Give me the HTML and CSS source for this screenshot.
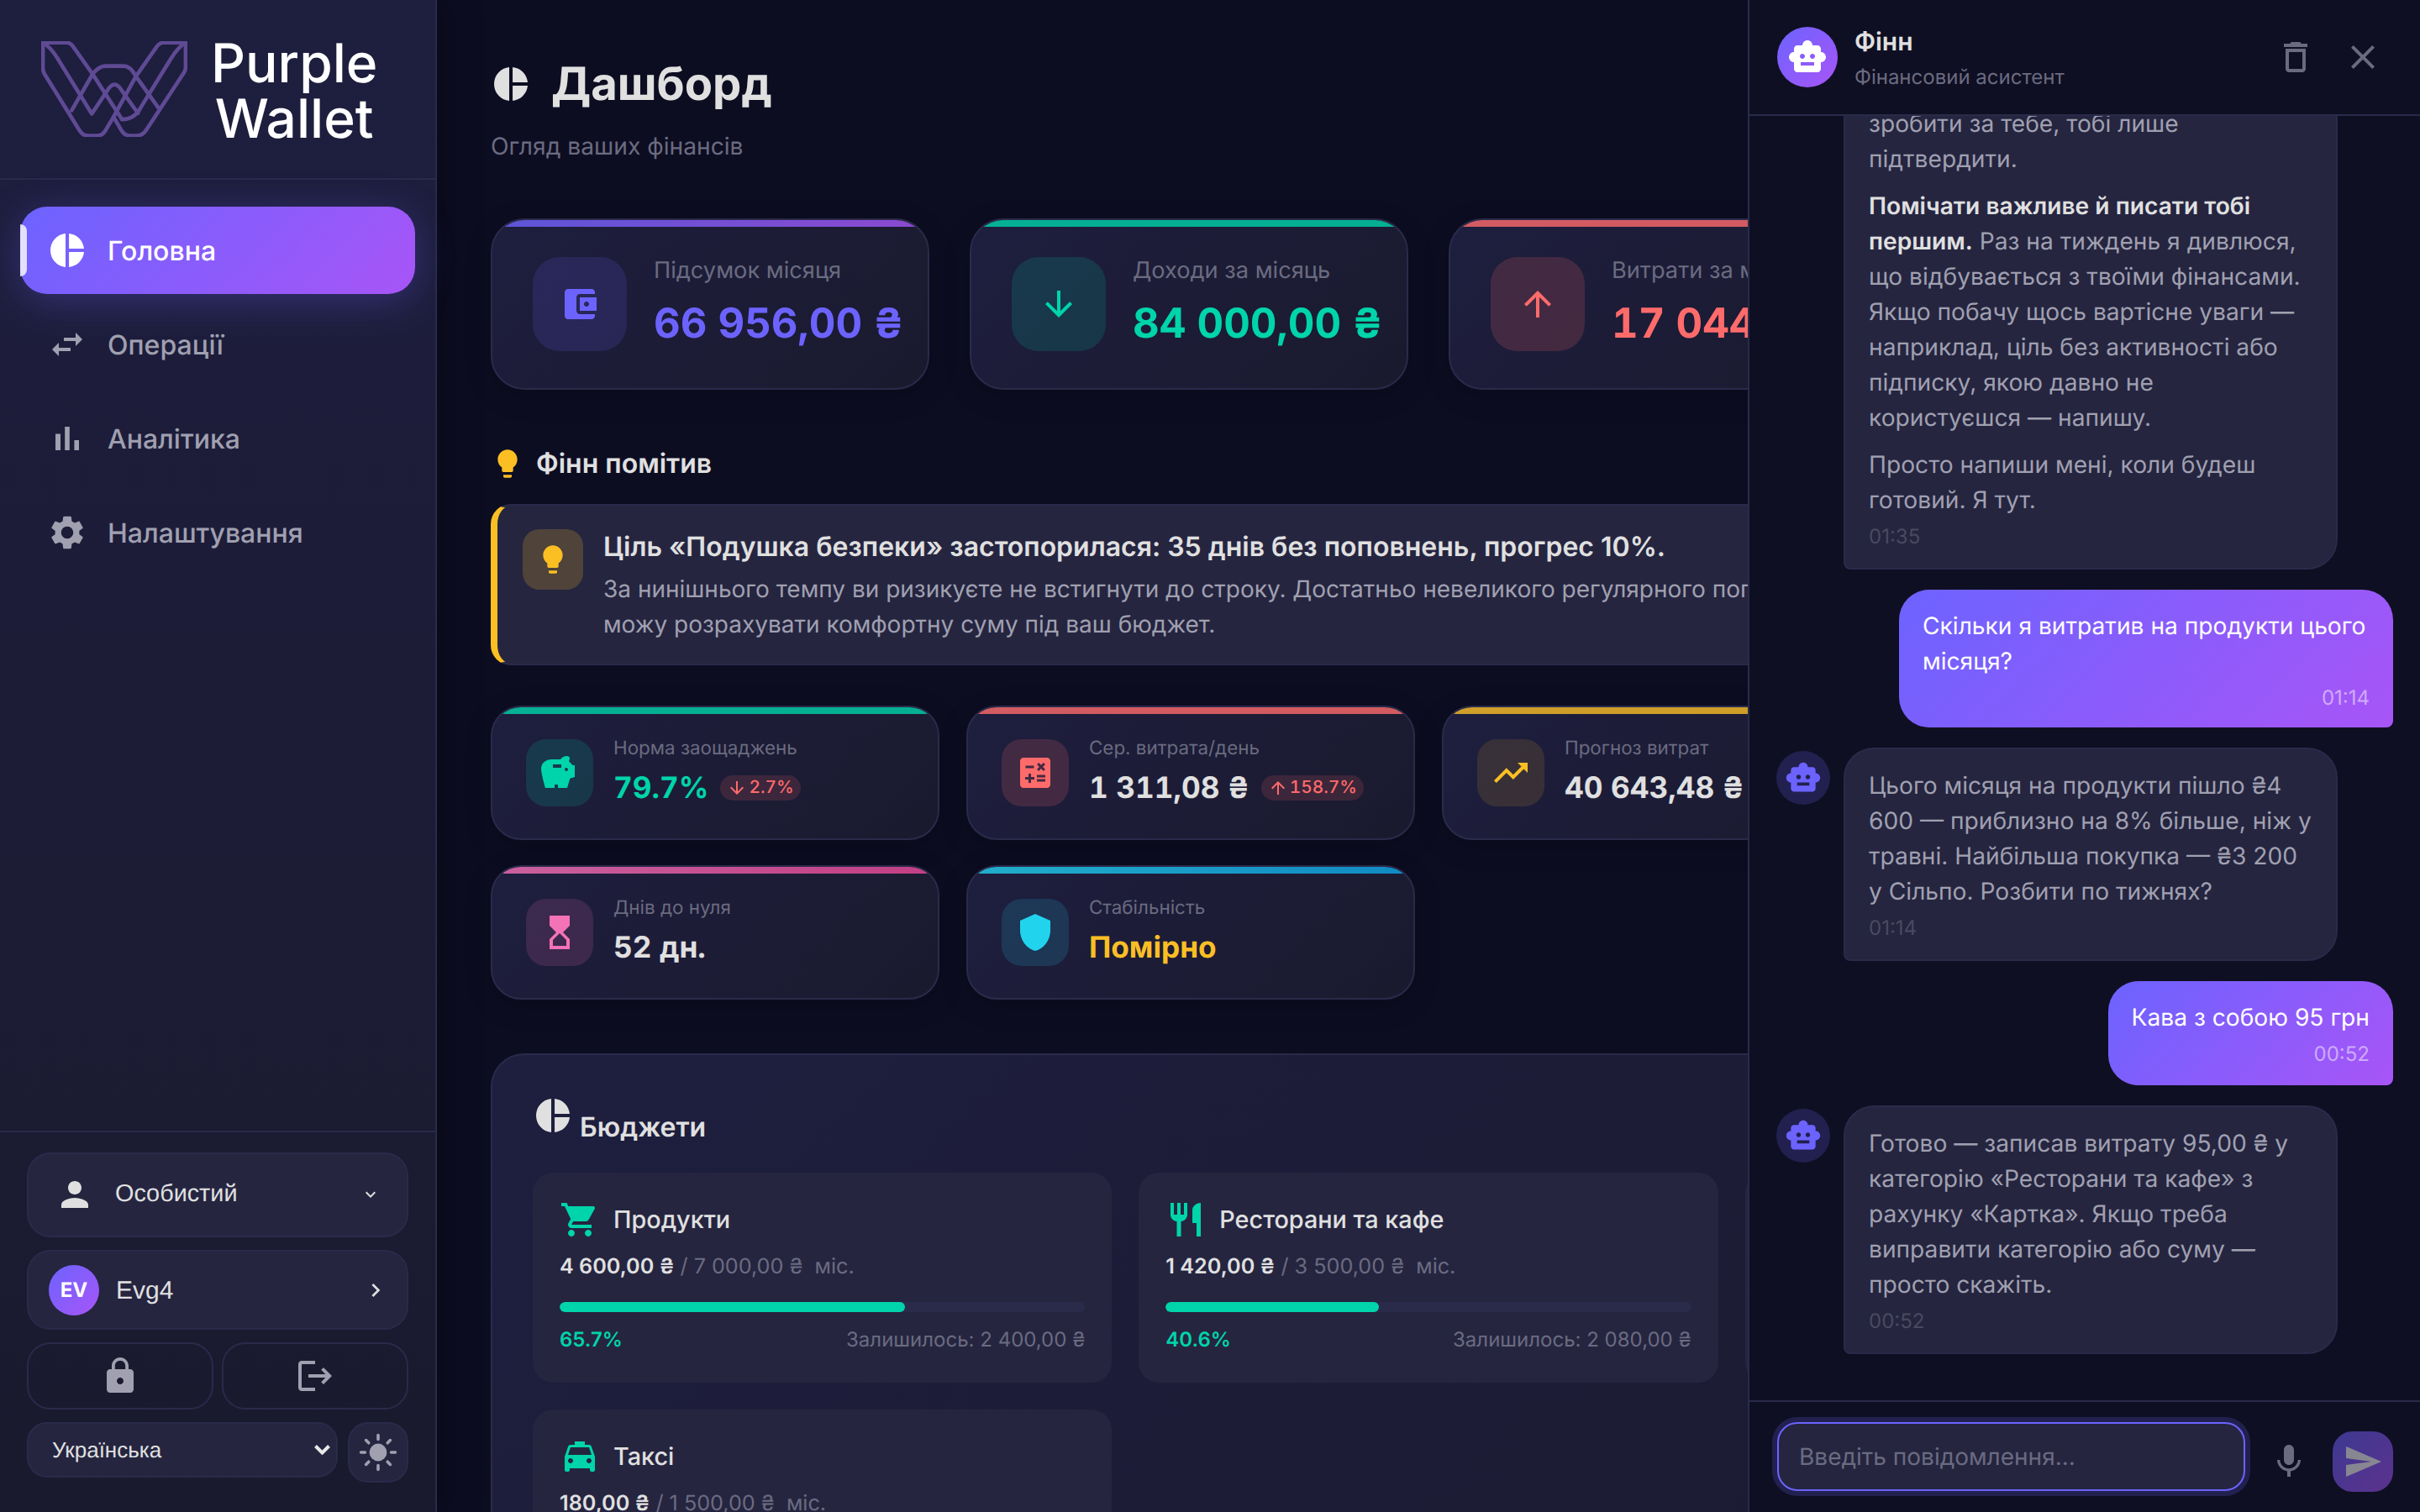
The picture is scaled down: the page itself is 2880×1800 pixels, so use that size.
FILE: index.html
```html
<!DOCTYPE html>
<html lang="uk">
<head>
<meta charset="utf-8">
<title>Purple Wallet</title>
<link rel="stylesheet" href="styles.css">
</head>
<body>
<svg class="defs" aria-hidden="true">
  <symbol id="i-pie" viewBox="0 0 24 24"><path d="M11 2v20c-5.07-.5-9-4.79-9-10s3.93-9.5 9-10zm2.03 0v8.99H22c-.47-4.74-4.24-8.52-8.97-8.99zm0 11.01V22c4.74-.47 8.5-4.25 8.97-8.99h-8.97z"/></symbol>
  <symbol id="i-swap" viewBox="0 0 24 24"><path d="M6.99 11L3 15l3.99 4v-3H14v-2H6.99v-3zM21 9l-3.99-4v3H10v2h7.01v3L21 9z"/></symbol>
  <symbol id="i-bars" viewBox="0 0 24 24"><path d="M5 9.2h3V19H5zM10.6 5h2.8v14h-2.8zm5.6 8H19v6h-2.8z"/></symbol>
  <symbol id="i-gear" viewBox="0 0 24 24"><path d="M19.14 12.94c.04-.3.06-.61.06-.94 0-.32-.02-.64-.07-.94l2.03-1.58c.18-.14.23-.41.12-.61l-1.92-3.32c-.12-.22-.37-.29-.59-.22l-2.39.96c-.5-.38-1.03-.7-1.62-.94l-.36-2.54c-.04-.24-.24-.41-.48-.41h-3.84c-.24 0-.43.17-.47.41l-.36 2.54c-.59.24-1.13.57-1.62.94l-2.39-.96c-.22-.08-.47 0-.59.22L2.74 8.87c-.12.21-.08.47.12.61l2.03 1.58c-.05.3-.09.63-.09.94s.02.64.07.94l-2.03 1.58c-.18.14-.23.41-.12.61l1.92 3.32c.12.22.37.29.59.22l2.39-.96c.5.38 1.03.7 1.62.94l.36 2.54c.05.24.24.41.48.41h3.84c.24 0 .44-.17.47-.41l.36-2.54c.59-.24 1.13-.56 1.62-.94l2.39.96c.22.08.47 0 .59-.22l1.92-3.32c.12-.22.07-.47-.12-.61l-2.01-1.58zM12 15.6c-1.98 0-3.6-1.62-3.6-3.6s1.62-3.6 3.6-3.6 3.6 1.62 3.6 3.6-1.62 3.6-3.6 3.6z"/></symbol>
  <symbol id="i-person" viewBox="0 0 24 24"><path d="M12 12c2.21 0 4-1.79 4-4s-1.79-4-4-4-4 1.79-4 4 1.79 4 4 4zm0 2c-2.67 0-8 1.34-8 4v2h16v-2c0-2.66-5.33-4-8-4z"/></symbol>
  <symbol id="i-more" viewBox="0 0 24 24"><path d="M16.59 8.59L12 13.17 7.41 8.59 6 10l6 6 6-6z"/></symbol>
  <symbol id="i-right" viewBox="0 0 24 24"><path d="M10 6L8.59 7.41 13.17 12l-4.58 4.59L10 18l6-6z"/></symbol>
  <symbol id="i-lock" viewBox="0 0 24 24"><path d="M18 8h-1V6c0-2.76-2.24-5-5-5S7 3.24 7 6v2H6c-1.1 0-2 .9-2 2v10c0 1.1.9 2 2 2h12c1.1 0 2-.9 2-2V10c0-1.1-.9-2-2-2zm-6 9c-1.1 0-2-.9-2-2s.9-2 2-2 2 .9 2 2-.9 2-2 2zm3.1-9H8.9V6c0-1.71 1.39-3.1 3.1-3.1 1.71 0 3.1 1.39 3.1 3.1v2z"/></symbol>
  <symbol id="i-logout" viewBox="0 0 24 24"><path d="M17 7l-1.41 1.41L18.17 11H8v2h10.17l-2.58 2.58L17 17l5-5zM4 5h8V3H4c-1.1 0-2 .9-2 2v14c0 1.1.9 2 2 2h8v-2H4V5z"/></symbol>
  <symbol id="i-sun" viewBox="0 0 24 24"><circle cx="12" cy="12" r="5.2"/><g stroke="currentColor" stroke-width="1.8" stroke-linecap="round"><path d="M12 1.8v2.4M12 19.8v2.4M1.8 12h2.4M19.8 12h2.4M4.8 4.8l1.6 1.6M17.6 17.6l1.6 1.6M4.8 19.2l1.6-1.6M17.6 6.4l1.6-1.6"/></g></symbol>
  <symbol id="i-wallet" viewBox="0 0 24 24"><path d="M21 18v1c0 1.1-.9 2-2 2H5c-1.11 0-2-.9-2-2V5c0-1.1.89-2 2-2h14c1.1 0 2 .9 2 2v1h-9c-1.11 0-2 .9-2 2v8c0 1.1.89 2 2 2h9zm-9-2h10V8H12v8zm4-2.5c-.83 0-1.5-.67-1.5-1.5s.67-1.5 1.5-1.5 1.5.67 1.5 1.5-.67 1.5-1.5 1.5z"/></symbol>
  <symbol id="i-down" viewBox="0 0 24 24"><path d="M20 12l-1.41-1.41L13 16.17V4h-2v12.17l-5.58-5.59L4 12l8 8 8-8z"/></symbol>
  <symbol id="i-up" viewBox="0 0 24 24"><path d="M4 12l1.41 1.41L11 7.83V20h2V7.83l5.58 5.59L20 12l-8-8-8 8z"/></symbol>
  <symbol id="i-bulb" viewBox="0 0 24 24"><path d="M9 21c0 .55.45 1 1 1h4c.55 0 1-.45 1-1v-1H9v1zm3-19C8.14 2 5 5.14 5 9c0 2.38 1.19 4.47 3 5.74V17c0 .55.45 1 1 1h6c.55 0 1-.45 1-1v-2.26c1.81-1.27 3-3.36 3-5.74 0-3.86-3.14-7-7-7z"/></symbol>
  <symbol id="i-piggy" viewBox="0 0 24 24"><path d="M19.83 7.5l-2.27-2.27c.07-.42.18-.81.32-1.15.08-.18.12-.37.12-.58 0-.83-.67-1.5-1.5-1.5-1.64 0-3.09.79-4 2h-5C3.46 4 1 6.46 1 9.5S3.5 21 3.5 21H9v-2h2v2h5.5l1.68-5.59 2.82-.94V7.5h-1.17zM13 9H8V7h5v2zm3 2c-.55 0-1-.45-1-1s.45-1 1-1 1 .45 1 1-.45 1-1 1z"/></symbol>
  <symbol id="i-calc" viewBox="0 0 24 24"><path d="M19 3H5c-1.1 0-2 .9-2 2v14c0 1.1.9 2 2 2h14c1.1 0 2-.9 2-2V5c0-1.1-.9-2-2-2zm-5.97 4.06L14.09 6l1.41 1.41L16.91 6l1.06 1.06-1.41 1.41 1.41 1.41-1.06 1.06-1.41-1.4-1.41 1.41-1.06-1.06 1.41-1.41-1.41-1.42zm-6.78.66h5v1.5h-5v-1.5zM11.5 16h-2v2H8v-2H6v-1.5h2v-2h1.5v2h2V16zm6.5 1.25h-5v-1.5h5v1.5zm0-2.5h-5v-1.5h5v1.5z"/></symbol>
  <symbol id="i-trend" viewBox="0 0 24 24"><path d="M16 6l2.29 2.29-4.88 4.88-4-4L2 16.59 3.41 18l6-6 4 4 6.3-6.29L22 12V6z"/></symbol>
  <symbol id="i-hour" viewBox="0 0 24 24"><path d="M6 2l.01 6L10 12l-3.99 4.01L6 22h12v-6l-4-4 4-3.99V2H6zm10 14.5V20H8v-3.5l4-4 4 4z"/></symbol>
  <symbol id="i-shield" viewBox="0 0 24 24"><path d="M12 1L3 5v6c0 5.55 3.84 10.74 9 12 5.16-1.26 9-6.45 9-12V5l-9-4z"/></symbol>
  <symbol id="i-cart" viewBox="0 0 24 24"><path d="M7 18c-1.1 0-1.99.9-1.99 2S5.9 22 7 22s2-.9 2-2-.9-2-2-2zM1 2v2h2l3.6 7.59-1.35 2.45c-.16.28-.25.61-.25.96 0 1.1.9 2 2 2h12v-2H7.42c-.14 0-.25-.11-.25-.25l.03-.12.9-1.63h7.45c.75 0 1.41-.41 1.75-1.03l3.58-6.49c.08-.14.12-.31.12-.48 0-.55-.45-1-1-1H5.21l-.94-2H1zm16 16c-1.1 0-1.99.9-1.99 2s.89 2 1.99 2 2-.9 2-2-.9-2-2-2z"/></symbol>
  <symbol id="i-food" viewBox="0 0 24 24"><path d="M11 9H9V2H7v7H5V2H3v7c0 2.12 1.66 3.84 3.75 3.97V22h2.5v-9.03C11.34 12.84 13 11.12 13 9V2h-2v7zm5-3v8h2.5v8H21V2c-2.76 0-5 2.24-5 4z"/></symbol>
  <symbol id="i-taxi" viewBox="0 0 24 24"><path d="M18.92 6.01C18.72 5.42 18.16 5 17.5 5H15V3H9v2H6.5c-.66 0-1.21.42-1.42 1.01L3 12v8c0 .55.45 1 1 1h1c.55 0 1-.45 1-1v-1h12v1c0 .55.45 1 1 1h1c.55 0 1-.45 1-1v-8l-2.08-5.99zM6.5 16c-.83 0-1.5-.67-1.5-1.5S5.67 13 6.5 13s1.5.67 1.5 1.5S7.33 16 6.5 16zm11 0c-.83 0-1.5-.67-1.5-1.5s.67-1.5 1.5-1.5 1.5.67 1.5 1.5-.67 1.5-1.5 1.5zM5 11l1.5-4.5h11L19 11H5z"/></symbol>
  <symbol id="i-bot" viewBox="0 0 24 24"><path d="M20 9V7c0-1.1-.9-2-2-2h-3c0-1.66-1.34-3-3-3S9 3.34 9 5H6c-1.1 0-2 .9-2 2v2c-1.66 0-3 1.34-3 3s1.34 3 3 3v4c0 1.1.9 2 2 2h12c1.1 0 2-.9 2-2v-4c1.66 0 3-1.34 3-3s-1.34-3-3-3zM7.5 11.5C7.5 10.67 8.17 10 9 10s1.5.67 1.5 1.5S9.83 13 9 13s-1.5-.67-1.5-1.5zM16 17H8v-2h8v2zm-1-4c-.83 0-1.5-.67-1.5-1.5S14.17 10 15 10s1.5.67 1.5 1.5S15.83 13 15 13z"/></symbol>
  <symbol id="i-trash" viewBox="0 0 24 24"><path d="M6 19c0 1.1.9 2 2 2h8c1.1 0 2-.9 2-2V7H6v12zM8 9h8v10H8V9zm7.5-5l-1-1h-5l-1 1H5v2h14V4h-3.5z"/></symbol>
  <symbol id="i-close" viewBox="0 0 24 24"><path d="M19 6.41L17.59 5 12 10.59 6.41 5 5 6.41 10.59 12 5 17.59 6.41 19 12 13.41 17.59 19 19 17.59 13.41 12z"/></symbol>
  <symbol id="i-mic" viewBox="0 0 24 24"><path d="M12 14c1.66 0 2.99-1.34 2.99-3L15 5c0-1.66-1.34-3-3-3S9 3.34 9 5v6c0 1.66 1.34 3 3 3zm5.3-3c0 3-2.54 5.1-5.3 5.1S6.7 14 6.7 11H5c0 3.41 2.72 6.23 6 6.72V21h2v-3.28c3.28-.48 6-3.3 6-6.72h-1.7z"/></symbol>
  <symbol id="i-send" viewBox="0 0 24 24"><path d="M2.01 21L23 12 2.01 3 2 10l15 2-15 2z"/></symbol>
</svg>

<aside class="sidebar">
  <div class="brand">
    <svg class="brand-mark" viewBox="57 87 521 343" fill="none" stroke="#5f4a94" stroke-width="14" stroke-linejoin="round" stroke-linecap="round" aria-hidden="true">
      <path d="M62 92H145Q160 92 170 106L240 205Q262 176 285 176H352Q375 176 395 213L470 106Q480 92 495 92H573V180Q573 190 567 200L432 405Q420 426 395 426H375Q355 426 342 405L315 358L287 405Q275 426 255 426H225Q205 426 192 405L68 205Q62 195 62 185Z"/>
      <path d="M62 92Q90 110 112 145L237 347L292 265Q318 220 345 265L402 345"/>
      <path d="M573 92Q545 110 520 150L412 325Q390 367 345 367"/>
      <path d="M240 205L345 367"/>
      <path d="M395 213L475 325"/>
      <path d="M240 205L165 335"/>
      <path d="M395 213L315 358"/>
    </svg>
    <div class="brand-name">Purple<br>Wallet</div>
  </div>
  <nav class="nav">
    <a class="nav-item active"><svg class="ic"><use href="#i-pie"/></svg>Головна</a>
    <a class="nav-item"><svg class="ic"><use href="#i-swap"/></svg>Операції</a>
    <a class="nav-item"><svg class="ic"><use href="#i-bars"/></svg>Аналітика</a>
    <a class="nav-item"><svg class="ic"><use href="#i-gear"/></svg>Налаштування</a>
  </nav>
  <div class="side-foot">
    <div class="pill-row profile-row">
      <svg class="ic"><use href="#i-person"/></svg>
      <span class="grow">Особистий</span>
      <svg class="ic tiny"><use href="#i-more"/></svg>
    </div>
    <div class="pill-row user-row">
      <span class="avatar">EV</span>
      <span class="grow">Evg4</span>
      <svg class="ic small-chev"><use href="#i-right"/></svg>
    </div>
    <div class="btn-row">
      <button class="ghost-btn"><svg class="ic"><use href="#i-lock"/></svg></button>
      <button class="ghost-btn"><svg class="ic"><use href="#i-logout"/></svg></button>
    </div>
    <div class="lang-row">
      <div class="lang-wrap">
        <select class="lang"><option>Українська</option></select>
        <svg class="lang-chev" viewBox="0 0 19 13" fill="none" stroke="#e8e8e8" stroke-width="4" aria-hidden="true"><path d="M1.5 2.5L9.500 10.500L17.500 2.500"/></svg>
      </div>
      <button class="theme"><svg class="ic"><use href="#i-sun"/></svg></button>
    </div>
  </div>
</aside>

<main class="main">
  <h1 class="page-title"><svg class="ic"><use href="#i-pie"/></svg>Дашборд</h1>
  <p class="page-sub">Огляд ваших фінансів</p>

  <section class="stats">
    <div class="stat bar-primary">
      <span class="stat-icon tint-primary"><svg class="ic"><use href="#i-wallet"/></svg></span>
      <div><div class="stat-label">Підсумок місяця</div><div class="stat-value c-primary">66 956,00 ₴</div></div>
    </div>
    <div class="stat bar-success">
      <span class="stat-icon tint-success"><svg class="ic"><use href="#i-down"/></svg></span>
      <div><div class="stat-label">Доходи за місяць</div><div class="stat-value c-success">84 000,00 ₴</div></div>
    </div>
    <div class="stat bar-danger">
      <span class="stat-icon tint-danger"><svg class="ic"><use href="#i-up"/></svg></span>
      <div><div class="stat-label">Витрати за місяць</div><div class="stat-value c-danger">17 044,00 ₴</div></div>
    </div>
    <div class="stat bar-primary"></div>
  </section>

  <h2 class="section-title"><svg class="ic"><use href="#i-bulb"/></svg>Фінн помітив</h2>
  <section class="insight">
    <span class="insight-icon"><svg class="ic"><use href="#i-bulb"/></svg></span>
    <div>
      <div class="insight-title">Ціль «Подушка безпеки» застопорилася: 35 днів без поповнень, прогрес 10%.</div>
      <div class="insight-text">За нинішнього темпу ви ризикуєте не встигнути до строку. Достатньо невеликого регулярного поповнення.<br>можу розрахувати комфортну суму під ваш бюджет.</div>
    </div>
  </section>

  <section class="minis">
    <div class="mini bar-success">
      <span class="mini-icon tint-success"><svg class="ic"><use href="#i-piggy"/></svg></span>
      <div><div class="mini-label">Норма заощаджень</div><div class="mini-value c-success">79.7%<span class="trend"><svg class="ic"><use href="#i-down"/></svg>2.7%</span></div></div>
    </div>
    <div class="mini bar-danger">
      <span class="mini-icon tint-danger"><svg class="ic"><use href="#i-calc"/></svg></span>
      <div><div class="mini-label">Сер. витрата/день</div><div class="mini-value">1 311,08 ₴<span class="trend"><svg class="ic"><use href="#i-up"/></svg>158.7%</span></div></div>
    </div>
    <div class="mini bar-warning">
      <span class="mini-icon tint-warning"><svg class="ic"><use href="#i-trend"/></svg></span>
      <div><div class="mini-label">Прогноз витрат</div><div class="mini-value">40 643,48 ₴</div></div>
    </div>
    <div class="mini bar-primary"></div>
    <div class="mini bar-pink">
      <span class="mini-icon tint-pink"><svg class="ic"><use href="#i-hour"/></svg></span>
      <div><div class="mini-label">Днів до нуля</div><div class="mini-value">52 дн.</div></div>
    </div>
    <div class="mini bar-cyan">
      <span class="mini-icon tint-cyan"><svg class="ic"><use href="#i-shield"/></svg></span>
      <div><div class="mini-label">Стабільність</div><div class="mini-value c-warning">Помірно</div></div>
    </div>
  </section>

  <section class="budgets">
    <h2 class="budgets-title"><svg class="ic"><use href="#i-pie"/></svg><span>Бюджети</span></h2>
    <div class="budget-grid">
      <article class="budget">
        <div class="budget-head"><svg class="ic"><use href="#i-cart"/></svg>Продукти</div>
        <div class="budget-sum"><b>4 600,00 ₴</b> / 7 000,00 ₴ &nbsp;міс.</div>
        <div class="track"><div class="fill" style="width:65.7%"></div></div>
        <div class="budget-foot"><span class="pct">65.7%</span><span>Залишилось: 2 400,00 ₴</span></div>
      </article>
      <article class="budget">
        <div class="budget-head"><svg class="ic"><use href="#i-food"/></svg>Ресторани та кафе</div>
        <div class="budget-sum"><b>1 420,00 ₴</b> / 3 500,00 ₴ &nbsp;міс.</div>
        <div class="track"><div class="fill" style="width:40.6%"></div></div>
        <div class="budget-foot"><span class="pct">40.6%</span><span>Залишилось: 2 080,00 ₴</span></div>
      </article>
      <article class="budget"></article>
      <article class="budget">
        <div class="budget-head"><svg class="ic"><use href="#i-taxi"/></svg>Таксі</div>
        <div class="budget-sum"><b>180,00 ₴</b> / 1 500,00 ₴ &nbsp;міс.</div>
      </article>
    </div>
  </section>
</main>

<aside class="chat">
  <header class="chat-head">
    <span class="chat-avatar"><svg class="ic"><use href="#i-bot"/></svg></span>
    <div class="chat-who"><div class="chat-name">Фінн</div><div class="chat-role">Фінансовий асистент</div></div>
    <svg class="ic head-btn"><use href="#i-trash"/></svg>
    <svg class="ic head-btn"><use href="#i-close"/></svg>
  </header>
  <div class="messages">
    <div class="msg bot">
      <span class="msg-spacer"></span>
      <div class="bubble">
        <p>зробити за тебе, тобі лише підтвердити.</p>
        <p><strong>Помічати важливе й писати тобі першим.</strong> Раз на тиждень я дивлюся, що відбувається з твоїми фінансами. Якщо побачу щось вартісне уваги — наприклад, ціль без активності або підписку, якою давно не<br>користуєшся — напишу.</p>
        <p>Просто напиши мені, коли будеш готовий. Я тут.</p>
        <div class="time">01:35</div>
      </div>
    </div>
    <div class="msg mine"><div class="bubble tight"><p>Скільки я витратив на продукти цього місяця?</p><div class="time">01:14</div></div></div>
    <div class="msg bot">
      <span class="msg-avatar"><svg class="ic"><use href="#i-bot"/></svg></span>
      <div class="bubble"><p>Цього місяця на продукти пішло ₴4 600 — приблизно на 8% більше, ніж у травні. Найбільша покупка — ₴3 200 у Сільпо. Розбити по тижнях?</p><div class="time">01:14</div></div>
    </div>
    <div class="msg mine"><div class="bubble"><p>Кава з собою 95 грн</p><div class="time">00:52</div></div></div>
    <div class="msg bot">
      <span class="msg-avatar"><svg class="ic"><use href="#i-bot"/></svg></span>
      <div class="bubble"><p>Готово — записав витрату 95,00 ₴ у категорію «Ресторани та кафе» з рахунку «Картка». Якщо треба виправити категорію або суму — просто скажіть.</p><div class="time">00:52</div></div>
    </div>
  </div>
  <footer class="chat-foot">
    <input class="chat-input" placeholder="Введіть повідомлення...">
    <svg class="ic mic"><use href="#i-mic"/></svg>
    <button class="send"><svg class="ic"><use href="#i-send"/></svg></button>
  </footer>
</aside>
</body>
</html>
```

FILE: styles.css
```css
* { box-sizing: border-box; }
html, body { height: 100%; }
body {
  margin: 0;
  display: flex;
  height: 1800px;
  overflow: hidden;
  background: #0d0d22;
  color: #e0e0e0;
  font-family: Inter, "Noto Sans", sans-serif;
  text-rendering: geometricPrecision;
}
.defs { display: none; }
.ic { width: 48px; height: 48px; fill: currentColor; flex: none; display: block; }
p { margin: 0; }
button { font: inherit; cursor: pointer; }

/* sidebar */
.sidebar {
  width: 520px;
  flex: none;
  height: 1800px;
  display: flex;
  flex-direction: column;
  background: linear-gradient(180deg, #1e1e3f 0%, #1a1a2e 100%);
  border-right: 2px solid #2a2a4a;
  box-shadow: 8px 0 40px rgba(0, 0, 0, .35);
  position: relative;
  z-index: 2;
}
.brand {
  height: 214px;
  flex: none;
  display: flex;
  gap: 28px;
  padding: 49px 0 0 49px;
  border-bottom: 2px solid #2a2a4a;
}
.brand-mark { width: 174px; height: 114px; flex: none; }
.brand-name {
  font-size: 64px;
  line-height: 66px;
  font-weight: 500;
  color: #fff;
  text-align: center;
  margin-top: -6px;
}
.nav { display: flex; flex-direction: column; gap: 8px; padding: 32px 24px 0; flex: 1; }
.nav-item {
  height: 104px;
  display: flex;
  align-items: center;
  gap: 24px;
  padding-left: 32px;
  border-radius: 32px;
  font-size: 32px;
  font-weight: 500;
  color: #a0a0b0;
  position: relative;
}
.nav-item.active {
  color: #fff;
  background: linear-gradient(135deg, #6c63ff, #a855f7);
  box-shadow: 0 8px 48px rgba(108, 99, 255, .3);
}
.nav-item.active::before {
  content: "";
  position: absolute;
  left: 0;
  top: 21px;
  width: 8px;
  height: 62px;
  background: rgba(255, 255, 255, .8);
  border-radius: 0 8px 8px 0;
}
.side-foot {
  border-top: 2px solid #2a2a4a;
  padding: 24px 32px 0 32px;
  height: 454px;
  flex: none;
  display: flex;
  flex-direction: column;
  gap: 15px;
}
.pill-row {
  display: flex;
  align-items: center;
  background: #252540;
  border: 2px solid #2a2a4a;
  border-radius: 28px;
  color: #e0e0e0;
  font-family: "Liberation Sans", sans-serif;
}
.grow { flex: 1; }
.profile-row { height: 101px; padding: 0 0 2px 31px; gap: 24px; font-size: 28.8px; }
.tiny { width: 24px; height: 24px; margin-right: 31px; }
.user-row { height: 95px; padding-left: 24px; gap: 20px; font-size: 30px; }
.user-row .grow { margin-top: 2px; }
.small-chev { width: 32px; height: 32px; margin-right: 21px; }
.avatar {
  width: 60px; height: 60px;
  border-radius: 50%;
  background: linear-gradient(135deg, #6c63ff, #a855f7);
  display: flex; align-items: center; justify-content: center;
  color: #fff;
  font-family: Inter, sans-serif;
  font-size: 24px;
  font-weight: 700;
}
.btn-row { display: grid; grid-template-columns: 1fr 1fr; gap: 10px; }
.ghost-btn {
  height: 80px;
  display: flex; align-items: center; justify-content: center;
  background: transparent;
  border: 2px solid #2a2a4a;
  border-radius: 28px;
  color: #a0a0b0;
}
.lang-row { display: flex; gap: 12px; align-items: flex-start; }
.lang-wrap { flex: 1; position: relative; height: 66px; }
.lang {
  appearance: none;
  width: 100%;
  height: 66px;
  background: #252540;
  border: 2px solid #2a2a4a;
  border-radius: 24px;
  color: #e0e0e0;
  padding: 0 20px 0 28px;
  font-family: "Liberation Sans", sans-serif;
  font-size: 26px;
  text-rendering: geometricPrecision;
}
.lang-chev { position: absolute; right: 9px; top: 26px; width: 19px; height: 13px; pointer-events: none; }
.theme {
  width: 72px; height: 72px;
  display: flex; align-items: center; justify-content: center;
  background: #252540;
  border: 2px solid #2a2a4a;
  border-radius: 24px;
  color: #a0a0b0;
  padding: 0;
}

/* main */
.main { flex: 1; min-width: 0; height: 1800px; overflow: hidden; padding: 64px 64px 0; }
.page-title {
  margin: 0;
  display: flex;
  align-items: center;
  gap: 24px;
  font-size: 54.4px;
  line-height: 72px;
  font-weight: 700;
}
.page-sub { margin-top: 16px; font-size: 28.2px; line-height: 44px; color: #6b6b80; }

.stats { display: grid; grid-template-columns: repeat(4, 1fr); gap: 48px; margin-top: 64px; }
.stat, .mini {
  position: relative;
  overflow: hidden;
  display: flex;
  align-items: flex-start;
  background: linear-gradient(135deg, #1e1e3f, #1a1a2e);
  border: 2px solid #2a2a4a;
  box-shadow: 0 8px 32px rgba(0, 0, 0, .2);
}
.stat::before, .mini::before {
  content: "";
  position: absolute;
  left: 0; right: 0; top: 0;
  height: 8px;
  opacity: .8;
}
.bar-primary::before { background: linear-gradient(90deg, #6c63ff, #a855f7); }
.bar-success::before { background: #00d4aa; }
.bar-danger::before { background: #ff6b6b; }
.bar-warning::before { background: #fbbf24; }
.bar-pink::before { background: linear-gradient(90deg, #f472b6, #ec4899); }
.bar-cyan::before { background: linear-gradient(90deg, #22d3ee, #0ea5e9); }
.stat { height: 204px; padding: 44px 48px; gap: 32px; border-radius: 40px; }
.stat-icon {
  width: 112px; height: 112px; border-radius: 32px;
  display: flex; align-items: center; justify-content: center; flex: none;
}
.tint-primary { background: rgba(108, 99, 255, .15); color: #6c63ff; }
.tint-success { background: rgba(0, 212, 170, .15); color: #00d4aa; }
.tint-danger { background: rgba(255, 107, 107, .17); color: #ff6b6b; }
.tint-warning { background: rgba(251, 191, 36, .12); color: #fbbf24; }
.tint-pink { background: rgba(244, 114, 182, .15); color: #f472b6; }
.tint-cyan { background: rgba(34, 211, 238, .15); color: #22d3ee; }
.stat-label { font-size: 27.2px; line-height: 32px; color: #6b6b80; white-space: nowrap; }
.stat-value { font-size: 49px; line-height: 70px; margin-top: 12px; font-weight: 700; white-space: nowrap; font-variant-numeric: tabular-nums; }
.c-primary { color: #6c63ff; }
.c-success { color: #00d4aa; }
.c-danger { color: #ff6b6b; }
.c-warning { color: #fbbf24; }

.section-title {
  margin: 68px 0 0;
  display: flex; align-items: center; gap: 14px;
  font-size: 32px; line-height: 40px; font-weight: 600;
}
.section-title .ic { width: 40px; height: 40px; color: #fbbf24; }

.insight {
  margin-top: 28px;
  height: 192px;
  display: flex;
  gap: 24px;
  padding: 28px 30px;
  background: #252540;
  border: 2px solid #2a2a4a;
  border-left: 8px solid #fbbf24;
  border-radius: 24px;
}
.insight-icon {
  width: 72px; height: 72px; flex: none; border-radius: 20px;
  background: rgba(251, 191, 36, .2); color: #fbbf24;
  display: flex; align-items: center; justify-content: center;
}
.insight-icon .ic { width: 40px; height: 40px; }
.insight-title { font-size: 32px; line-height: 42px; font-weight: 600; white-space: nowrap; }
.insight-text { margin-top: 8px; font-size: 28px; line-height: 42px; color: #a0a0b0; white-space: nowrap; }

.minis { display: grid; grid-template-columns: repeat(4, 1fr); gap: 30px 32px; margin-top: 48px; }
.mini { height: 160px; padding: 38px 40px; gap: 24px; border-radius: 36px; }
.mini-icon {
  width: 80px; height: 80px; border-radius: 24px; flex: none;
  display: flex; align-items: center; justify-content: center;
}
.mini-label { font-size: 22.4px; line-height: 28px; margin-top: -3px; color: #6b6b80; white-space: nowrap; }
.mini-value {
  display: flex; align-items: center; gap: 14px;
  font-size: 35.2px; line-height: 52px; margin-top: 7px; font-weight: 700; white-space: nowrap; font-variant-numeric: tabular-nums;
}
.trend {
  display: flex; align-items: center; gap: 2px;
  height: 30px; padding: 0 8px;
  border-radius: 15px;
  background: rgba(255, 107, 107, .15);
  color: #ff6b6b;
  font-size: 20.8px; font-weight: 500;
}
.trend .ic { width: 24px; height: 24px; }

.budgets {
  margin-top: 64px;
  padding: 48px;
  background: linear-gradient(135deg, #1e1e3f, #1a1a2e);
  border: 2px solid #2a2a4a;
  border-radius: 40px;
}
.budgets-title { margin: 0; font-size: 32px; line-height: 48px; font-weight: 600; display: flex; align-items: flex-start; gap: 8px; height: 92px; }
.budgets-title span { margin-top: 14px; }
.budget-grid { display: grid; grid-template-columns: repeat(3, 1fr); gap: 32px; }
.budget { background: #252540; border-radius: 24px; padding: 32px; min-height: 250px; }
.budget-head { display: flex; align-items: center; gap: 16px; font-size: 28.8px; line-height: 48px; font-weight: 500; }
.budget-head .ic { color: #00d4aa; }
.budget-sum { margin-top: 12px; font-size: 25.2px; line-height: 40px; color: #6b6b80; white-space: nowrap; }
.budget-sum b { color: #e0e0e0; font-weight: 600; }
.track { margin-top: 22px; height: 12px; border-radius: 6px; background: #2a2a4a; overflow: hidden; }
.fill { height: 100%; border-radius: 6px; background: #00d4aa; }
.budget-foot { margin-top: 16px; display: flex; justify-content: space-between; font-size: 24px; line-height: 34px; color: #6b6b80; }
.pct { color: #00d4aa; font-weight: 600; }

/* chat panel */
.chat {
  position: absolute;
  top: 0; right: 0;
  width: 800px;
  height: 1800px;
  display: flex;
  flex-direction: column;
  background: #0f0f23;
  border-left: 2px solid #2a2a4a;
  z-index: 3;
}
.chat-head {
  height: 138px; flex: none;
  display: flex; align-items: center;
  padding: 0 44px 0 33px;
  gap: 32px;
  border-bottom: 2px solid #2a2a4a;
  background: #0f0f23;
  position: relative;
  z-index: 1;
}
.chat-avatar {
  width: 72px; height: 72px; border-radius: 50%; flex: none; margin-right: -12px;
  background: linear-gradient(135deg, #6c63ff, #a855f7);
  color: #fff;
  display: flex; align-items: center; justify-content: center;
}
.chat-who { flex: 1; padding-top: 4px; }
.chat-name { font-size: 30px; line-height: 36px; font-weight: 600; }
.chat-role { font-size: 24px; line-height: 32px; margin-top: 8px; color: #6b6b80; }
.head-btn { color: #6b6b80; }
.messages {
  flex: 1; min-height: 0;
  overflow: hidden;
  display: flex; flex-direction: column; justify-content: flex-end;
  gap: 24px;
  padding: 0 32px 55px 32px;
}
.msg { display: flex; gap: 16px; align-items: flex-start; flex: none; }
.msg.mine { justify-content: flex-end; }
.msg-avatar {
  width: 64px; height: 64px; border-radius: 50%; flex: none; margin-top: 4px;
  background: rgba(108, 99, 255, .2);
  color: #6c63ff;
  display: flex; align-items: center; justify-content: center;
}
.msg-avatar .ic { width: 44px; height: 44px; }
.msg-spacer { width: 64px; flex: none; }
.bubble {
  max-width: 588px;
  padding: 22px 26px 22px 28px;
  border-radius: 36px;
  font-size: 28.16px;
  line-height: 42px;
}
.bubble.tight { padding-bottom: 20px; }
.bot .bubble {
  width: 588px;
  background: #252540;
  border: 2px solid #2a2a4a;
  border-bottom-left-radius: 8px;
  color: #a0a0b0;
}
.mine .bubble {
  padding-right: 28px;
  background: linear-gradient(135deg, #6c63ff, #a855f7);
  border-bottom-right-radius: 8px;
  color: #fff;
}
.bubble p + p { margin-top: 14px; }
.bubble strong { color: #e0e0e0; font-weight: 600; }
.time { margin-top: 8px; font-size: 24px; line-height: 30px; color: #4a4a60; }
.mine .time { text-align: right; color: rgba(255, 255, 255, .5); }
.chat-foot {
  height: 133px; flex: none;
  display: flex; align-items: flex-end; gap: 0;
  padding: 0 32px 24px 33px;
  border-top: 2px solid #2a2a4a;
}
.chat-input {
  width: 557px; height: 82px;
  margin-bottom: 1px;
  padding: 0 24px;
  background: #252540;
  border: 2px solid #6c63ff;
  border-radius: 24px;
  box-shadow: 0 0 0 6px rgba(108, 99, 255, .2);
  color: #e0e0e0;
  font: 28px Inter, sans-serif;
  text-rendering: geometricPrecision;
  outline: none;
}
.chat-input::placeholder { color: #6b6b80; }
.mic { margin: 0 28px 12px 28px; color: #6b6b80; }
.send {
  width: 72px; height: 72px; padding: 0; border: 0;
  border-radius: 24px;
  background: linear-gradient(135deg, #6c63ff, #a855f7);
  opacity: .5;
  color: #fff;
  display: flex; align-items: center; justify-content: center;
}
```
